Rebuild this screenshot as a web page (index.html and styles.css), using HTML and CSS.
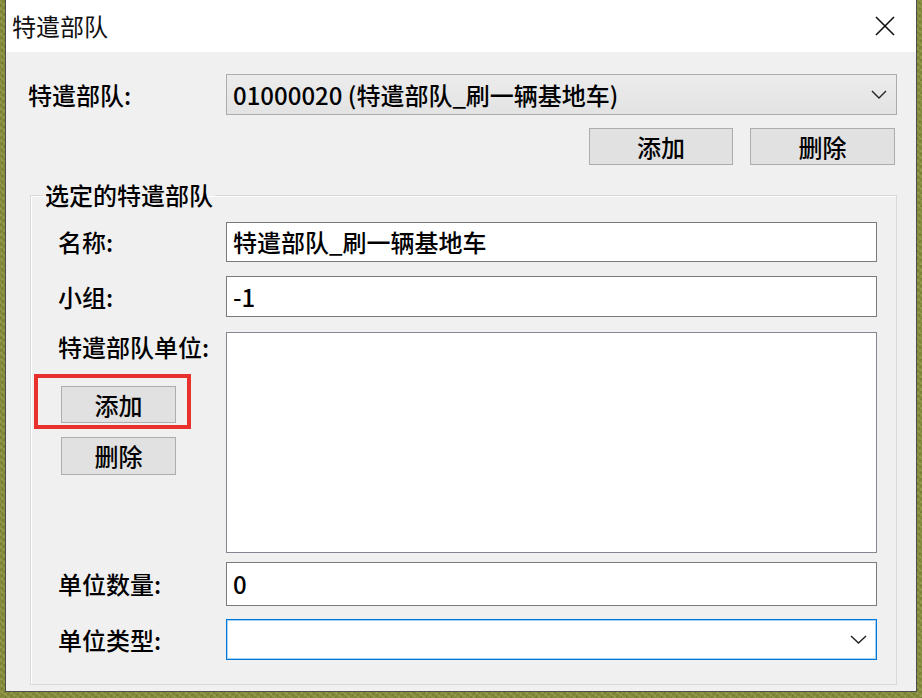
FILE: index.html
```html
<!DOCTYPE html>
<html lang="zh-CN">
<head>
<meta charset="utf-8">
<title>特遣部队</title>
<link rel="stylesheet" href="styles.css">
</head>
<body>
<div class="wrap">
  <div class="dialog">
    <div class="titlebar">
      <span class="title">特遣部队</span>
      <svg class="close" width="20" height="20" viewBox="0 0 20 20"><path d="M1 1L19 19M19 1L1 19" stroke="#111" stroke-width="1.6" fill="none"/></svg>
    </div>
    <div class="content">
      <div class="row-top">
        <span class="label-top">特遣部队:</span>
        <div class="combo combo-gray">
          <span class="combo-text">01000020 (特遣部队_刷一辆基地车)</span>
          <svg class="chev" width="16" height="9" viewBox="0 0 16 9"><path d="M1 1L8 8L15 1" stroke="#222" stroke-width="1.4" fill="none"/></svg>
        </div>
      </div>
      <div class="row-buttons">
        <div class="btn btn-top-add">添加</div>
        <div class="btn btn-top-del">删除</div>
      </div>
      <fieldset class="group">
        <legend class="legend">选定的特遣部队</legend>
        <div class="group-body">
          <div class="field field-name">
            <span class="label">名称:</span>
            <div class="input h40">特遣部队_刷一辆基地车</div>
          </div>
          <div class="field field-group">
            <span class="label">小组:</span>
            <div class="input h41">-1</div>
          </div>
          <div class="field field-list">
            <div class="left-col">
              <span class="label label-list">特遣部队单位:</span>
              <div class="highlight">
                <div class="btn btn-small">添加</div>
              </div>
              <div class="btn btn-small btn-del">删除</div>
            </div>
            <div class="listbox"></div>
          </div>
          <div class="field field-count">
            <span class="label">单位数量:</span>
            <div class="input h44">0</div>
          </div>
          <div class="field">
            <span class="label">单位类型:</span>
            <div class="combo combo-focus">
              <span class="combo-text"></span>
              <svg class="chev" width="17" height="9" viewBox="0 0 17 9"><path d="M1 1L8.5 8L16 1" stroke="#222" stroke-width="1.4" fill="none"/></svg>
            </div>
          </div>
        </div>
      </fieldset>
    </div>
  </div>
</div>
</body>
</html>
```

FILE: styles.css
```css
html, body {
  margin: 0;
  padding: 0;
}
body {
  width: 922px;
  height: 698px;
  overflow: hidden;
  background-color: #838a3c;
  background-image:
    repeating-linear-gradient(37deg, rgba(255,255,160,0.12) 0 2px, rgba(0,0,0,0) 2px 5px),
    repeating-linear-gradient(-53deg, rgba(40,50,0,0.15) 0 1px, rgba(0,0,0,0) 1px 4px);
  font-family: "Noto Sans CJK SC", "Noto Sans", sans-serif;
  font-weight: 500;
  color: #000;
}
.wrap {
  padding: 0 5px;
}
.dialog {
  width: 910px;
  height: 691px;
  background: #f0f0f0;
  border: 1px solid #4d4d4d;
  border-top: none;
  display: flex;
  flex-direction: column;
}
.titlebar {
  height: 52px;
  background: #ffffff;
  display: flex;
  align-items: center;
  justify-content: space-between;
  padding: 0 21px 0 6px;
  flex: none;
}
.title {
  font-size: 24px;
  line-height: 24px;
  color: #111;
  font-weight: 400;
}
.close {
  display: block;
}
.content {
  padding: 22px 19px 0 22px;
}
.row-top {
  display: flex;
  align-items: center;
}
.label-top {
  width: 198px;
  font-size: 24px;
  line-height: 30px;
  flex: none;
}
.combo {
  flex: 1;
  height: 41px;
  box-sizing: border-box;
  display: flex;
  align-items: center;
  justify-content: space-between;
  padding: 0 9px 0 6px;
}
.combo-gray {
  background: linear-gradient(#ececec, #e3e3e3);
  border: 1px solid #acacac;
}
.combo-focus {
  background: #ffffff;
  border: 1px solid #0078d7;
  box-shadow: inset 0 0 0 1px rgba(0, 120, 215, 0.35);
}
.combo-text {
  font-size: 24px;
  line-height: 30px;
  white-space: nowrap;
}
.chev {
  display: block;
  flex: none;
}
.row-buttons {
  display: flex;
  justify-content: flex-end;
  gap: 17px;
  margin-top: 13px;
  margin-right: 2px;
}
.btn {
  height: 37px;
  box-sizing: border-box;
  background: #e1e1e1;
  border: 1px solid #adadad;
  display: flex;
  align-items: center;
  justify-content: center;
  font-size: 24px;
  line-height: 30px;
}
.btn-top-add {
  width: 144px;
}
.btn-top-del {
  width: 145px;
}
.group {
  margin: 18px 0 0 2px;
  padding: 0;
  border: 1px solid #d9d9d9;
  box-shadow: inset 1px 1px 0 #ffffff;
  min-width: 0;
}
.legend {
  margin-left: 12px;
  padding: 0 2px;
  font-size: 24px;
  line-height: 24px;
}
.group-body {
  padding: 15px 19px 24px 27px;
}
.field {
  display: flex;
  align-items: center;
}
.field-name {
  margin-bottom: 14px;
}
.field-group {
  margin-bottom: 15px;
}
.field-list {
  align-items: flex-start;
  margin-bottom: 9px;
}
.field-count {
  margin-bottom: 13px;
}
.label {
  width: 168px;
  flex: none;
  font-size: 24px;
  line-height: 30px;
}
.input {
  flex: 1;
  box-sizing: border-box;
  background: #ffffff;
  border: 1px solid #7a7a7a;
  padding: 0 6px;
  display: flex;
  align-items: center;
  font-size: 24px;
  line-height: 30px;
}
.h40 { height: 40px; }
.h41 { height: 41px; }
.h44 { height: 44px; }
.left-col {
  width: 168px;
  flex: none;
  display: flex;
  flex-direction: column;
  align-items: flex-start;
}
.label-list {
  width: auto;
}
.highlight {
  margin: 12px 0 0 -24px;
  border: 4px solid #e8302c;
  padding: 8px 11px 2px 23px;
}
.btn-small {
  width: 115px;
}
.btn-del {
  margin: 8px 0 0 3px;
  height: 38px;
}
.listbox {
  flex: 1;
  height: 221px;
  box-sizing: border-box;
  background: #ffffff;
  border: 1px solid #828790;
}
```
